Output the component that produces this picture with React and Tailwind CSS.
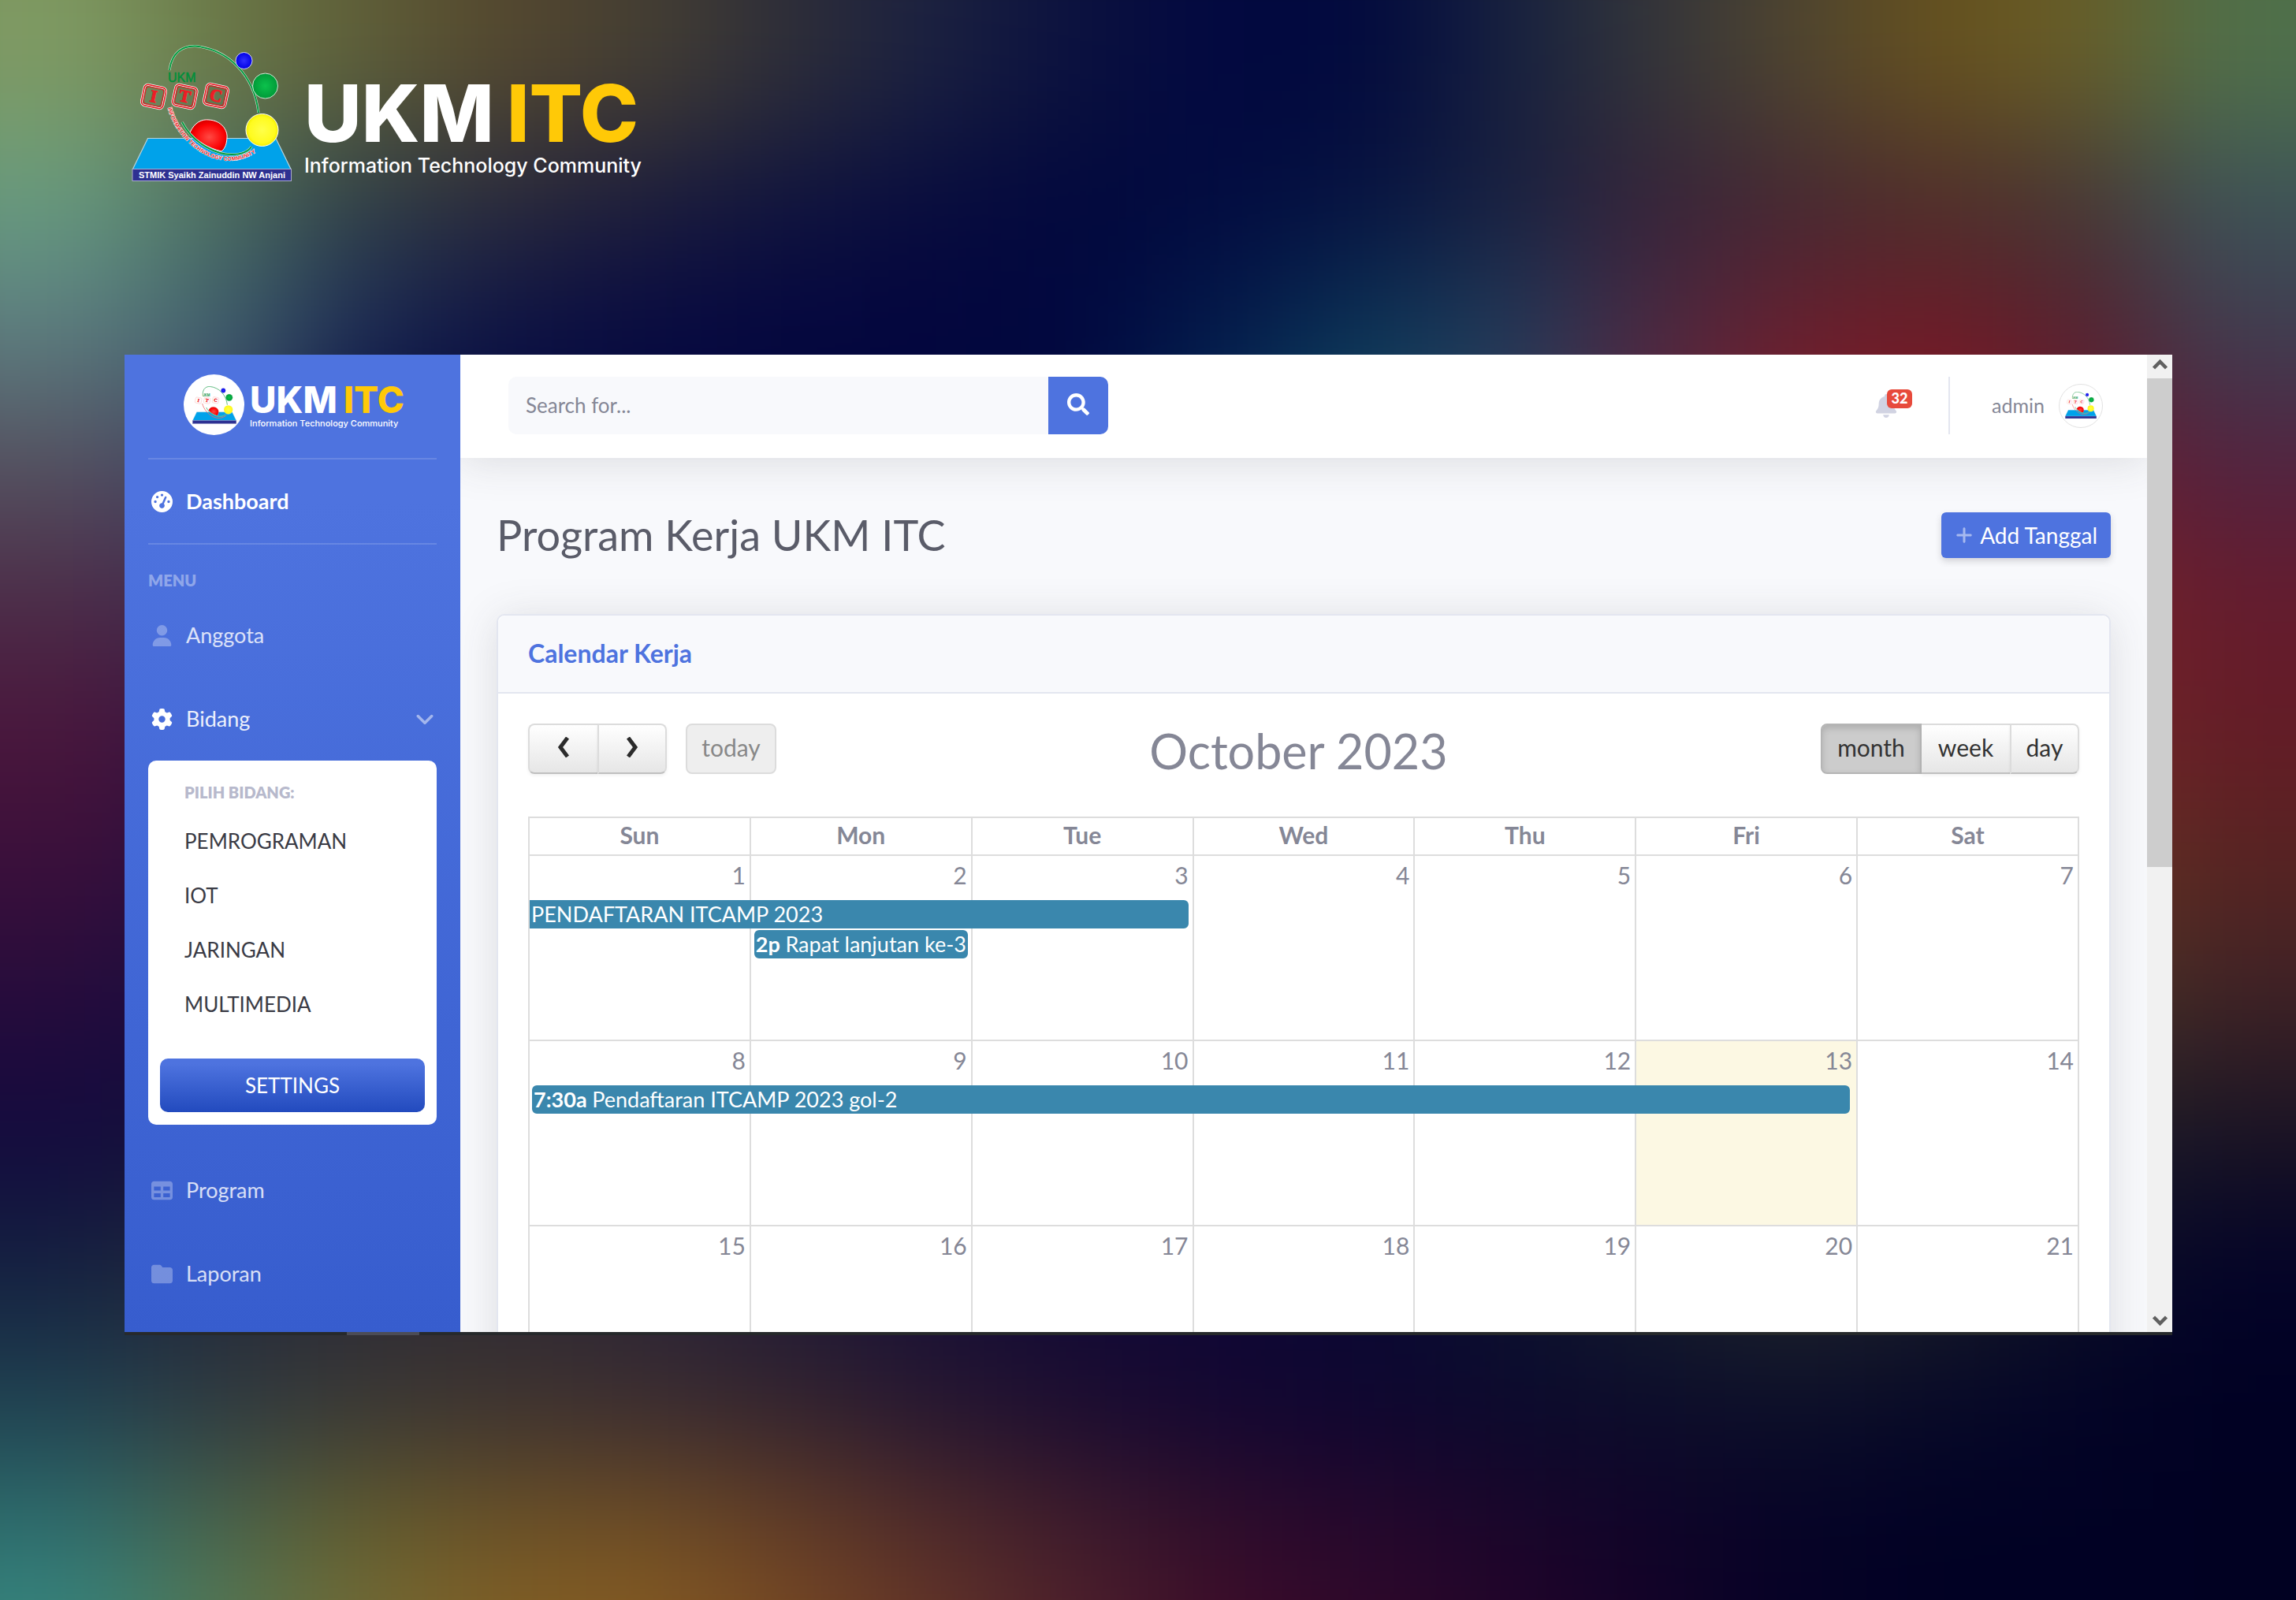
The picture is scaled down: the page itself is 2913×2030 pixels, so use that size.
import React from "react";
import { FaSearch } from "react-icons/fa";
import {
  FaAngleDown,
  FaBell,
  FaFolder,
  FaGaugeHigh,
  FaGear,
  FaPlus,
  FaTable,
  FaUser,
} from "react-icons/fa6";

const N = "#02083c";
const mid = (a, b, y, z) => [a, b, N, N, N, N, N, N, N, N, N, N, N, N, y, z];

/* Colour samples of the blurred backdrop, 16 columns by 13 rows. */
const MESH = [
  ["#7f9a62", "#6b7a48", "#5f5f38", "#55482e", "#453f33", "#2e2e38", "#1b2140", "#0b113f", "#020840", "#020a3e", "#16203f", "#33353a", "#4f4530", "#66511e", "#685e28", "#50704a"],
  ["#669c80", "#4c7062", "#2f4048", "#2a2a3c", "#1c1d3c", "#10143e", "#080c3e", "#02083c", "#020b40", "#071340", "#18203f", "#35233a", "#442833", "#4d2f2c", "#443836", "#3d5358"],
  ["#5c7c80", "#40606e", "#1c2a55", "#0d1244", "#080a42", "#04063f", "#03053e", "#010840", "#041a4a", "#0b3456", "#223a5a", "#4a2a42", "#68202f", "#6e1a27", "#57202f", "#403c50"],
  ["#54505f", "#3f4466", N, N, N, N, N, N, "#06305a", "#155066", "#30405c", "#642440", "#841a28", "#8c1a22", "#6a1c30", "#532340"],
  mid("#4c2c48", "#40284c", "#7a2226", "#651c2e"),
  mid("#4a163c", "#36113e", "#75292a", "#641c26"),
  mid("#3a0f3a", "#280e3e", "#683822", "#572422"),
  mid("#260c3c", "#170b3f", "#4a3826", "#3d2226"),
  ["#130a3e", "#14103c", "#1e1c38", "#221e38", "#1e1a3a", "#18143a", "#100c3a", "#0c083a", "#0a0638", "#0a0a36", "#101c34", "#1e2a32", "#2c3030", "#282a2c", "#1c1e28", "#1a1424"],
  ["#142040", "#22293a", "#2c2a35", "#2e2a34", "#2a2538", "#1f1b38", "#160f38", "#110a38", "#0f0736", "#0a0834", "#0d1230", "#171e2e", "#22272c", "#1b1e29", "#0c0f27", "#030328"],
  ["#20404f", "#2e3840", "#383635", "#3c3230", "#392b30", "#31222f", "#241630", "#1a0c30", "#120732", "#0d0630", "#0a0a2d", "#0b0d2b", "#0d1029", "#080a28", "#030426", "#010123"],
  ["#2f706f", "#4a684d", "#65602e", "#6f5426", "#725024", "#663f26", "#532c29", "#411d2b", "#320e2a", "#28082c", "#1c052a", "#100328", "#050226", "#010124", "#010124", "#010122"],
  ["#3a8f86", "#57805a", "#78703a", "#8a6424", "#8e6022", "#7e4c22", "#6a3828", "#54202c", "#420c2a", "#33082a", "#25052a", "#150328", "#060226", "#010124", "#010124", "#010122"],
];

function Backdrop() {
  const rows = [MESH[0], ...MESH];
  return (
    <div
      aria-hidden="true"
      className="absolute -inset-x-[6.25%] top-[-8.33%] bottom-[-8.33%] -z-10 grid grid-cols-18 grid-rows-14 blur-[80px]"
    >
      {rows.flatMap((row, r) =>
        [row[0], ...row, row[15]].map((color, c) => (
          <div key={r + "-" + c} style={{ backgroundColor: color }} />
        ))
      )}
    </div>
  );
}

function Tile({ x, y, letter, detailed }) {
  return (
    <g transform={`translate(${x} ${y}) rotate(12)`}>
      {detailed && (
        <>
          <rect x="-14" y="-13.500" width="28" height="27" rx="5" fill="none" stroke="#fff" strokeWidth="3" />
          <rect x="-11.500" y="-11" width="23" height="22" rx="3.500" fill="none" stroke="#e8121c" strokeWidth="1" />
        </>
      )}
      <rect
        x="-14"
        y="-13.500"
        width="28"
        height="27"
        rx="5"
        fill="none"
        stroke={detailed ? "#e8121c" : "#f7b0b0"}
        strokeWidth="1.500"
      />
      <text
        y="7"
        textAnchor="middle"
        className="font-['Liberation_Serif',serif] text-[22px] font-bold"
        fill="#ee1c25"
        stroke="#ee1c25"
        strokeWidth="1"
      >
        {letter}
      </text>
    </g>
  );
}

function Emblem({ id, detailed = false, className }) {
  return (
    <svg viewBox="167 57 203 174" className={className} role="img" aria-label="UKM ITC logo">
      <defs>
        <radialGradient id={id + "-r"} cx="52%" cy="55%">
          <stop offset="0" stopColor="#ff4a44" />
          <stop offset=".8" stopColor="#fb0204" />
          <stop offset="1" stopColor="#e00000" />
        </radialGradient>
        <radialGradient id={id + "-y"}>
          <stop offset="0" stopColor="#ffff4a" />
          <stop offset=".8" stopColor="#fffb1e" />
          <stop offset="1" stopColor="#f2ee00" />
        </radialGradient>
        <radialGradient id={id + "-g"}>
          <stop offset="0" stopColor="#0cc24c" />
          <stop offset="1" stopColor="#009a38" />
        </radialGradient>
        <radialGradient id={id + "-b"}>
          <stop offset="0" stopColor="#3030ff" />
          <stop offset="1" stopColor="#0000e4" />
        </radialGradient>
      </defs>
      <path d="M187.500 175.500H350L369 214.500H168.500Z" fill="#00a2ea" stroke="#b9d3da" strokeWidth="1.200" />
      <rect x="168" y="214.500" width="201.500" height="15" fill="#2e3192" stroke="#a9a9cc" strokeWidth="1" />
      <path d="M241 168C247 155 256 151 265 152C281 153 289 165 288 175C287.500 182 286 188 281 192C264 188 250 179 241 168Z" fill={`url(#${id}-r)`} stroke="#fff" strokeWidth="1" />
      <g fill="none">
        <path d="M215 89C218 66 232 58 248 58.500C290 63 322 95 328 143" stroke="#cfe3d0" strokeWidth="3" />
        <path d="M215 89C218 66 232 58 248 58.500C290 63 322 95 328 143" stroke="#009a3e" strokeWidth="1.800" />
        <path d="M231 155C246 184 276 196 294 196C306 196 315 192 319 186" stroke="#cfe3d0" strokeWidth="3" />
        <path d="M231 155C246 184 276 196 294 196C306 196 315 192 319 186" stroke="#009a3e" strokeWidth="1.800" />
      </g>
      <circle cx="309.500" cy="77" r="10.500" fill={`url(#${id}-b)`} stroke="#d5d8ee" strokeWidth="1" />
      <circle cx="336.500" cy="109" r="16" fill={`url(#${id}-g)`} stroke="#cfe8d4" strokeWidth="1" />
      <circle cx="332.500" cy="165" r="20.500" fill={`url(#${id}-y)`} stroke="#fff" strokeWidth="1" />
      <Tile x={195} y={122.5} letter="I" detailed={detailed} />
      <Tile x={234.5} y={122.5} letter="T" detailed={detailed} />
      <Tile x={274} y={121.5} letter="C" detailed={detailed} />
      <text x="213" y="104" className="font-['Liberation_Sans',sans-serif] text-[16px]" fill="#008f3a" stroke="#008f3a" strokeWidth=".5">
        UKM
      </text>
      {detailed ? (
        <>
          <path id={id + "-ring"} d="M213 137C220 164 240 186 262 197C284 208 312 206 331 188" fill="none" />
          <text
            className="font-['Liberation_Sans',sans-serif] text-[7px] font-bold"
            fill="#ee1c25"
            stroke="#fff"
            strokeWidth="1"
            paintOrder="stroke"
          >
            <textPath href={`#${id}-ring`}>INFORMATION TECHNOLOGY COMMUNITY</textPath>
          </text>
          <text
            x="269"
            y="226"
            textAnchor="middle"
            className="font-['Liberation_Sans',sans-serif] text-[11px] font-bold"
            fill="#fff"
          >
            STMIK Syaikh Zainuddin NW Anjani
          </text>
        </>
      ) : (
        <path d="M213 137C220 164 240 186 262 197C284 208 308 204 324 190" fill="none" stroke="#ef6a6a" strokeWidth="3" />
      )}
    </svg>
  );
}

function NavLink({ icon: Icon, children, strong, active, trailing }) {
  return (
    <a
      href="#"
      className={
        "flex h-[106px] items-center gap-[17px] pl-1 text-[27px] " +
        (active ? "font-bold text-white" : strong ? "text-white/90" : "text-white/80")
      }
    >
      <Icon className={"size-[27px] " + (active || strong ? "text-white" : "text-white/30")} />
      <span className="flex-1">{children}</span>
      {trailing}
    </a>
  );
}

function Sidebar() {
  return (
    <aside className="flex w-[426px] shrink-0 flex-col bg-linear-to-b from-[#4e73df] from-15% to-[#375dce] px-[30px] text-[26px]">
      <a href="#" className="flex h-[131px] items-center justify-center gap-[7px] pl-1 pb-1">
        <span className="flex size-[77px] items-center justify-center rounded-full bg-white">
          <Emblem id="brand" className="w-14" />
        </span>
        <span className="flex flex-col font-['Inter',sans-serif] text-white">
          <span className="flex gap-2 text-[46px] leading-[46px] font-extrabold">
            <span>UKM</span>
            <span className="text-[#ffc907]">ITC</span>
          </span>
          <span className="text-[11px] leading-[14px] font-medium">Information Technology Community</span>
        </span>
      </a>
      <hr className="border-t-2 border-white/15" />
      <nav className="flex flex-col">
        <NavLink icon={FaGaugeHigh} active>
          Dashboard
        </NavLink>
        <hr className="border-t-2 border-white/15" />
        <h2 className="pt-8 pb-1 text-[20px] leading-[26px] font-extrabold text-white/40">MENU</h2>
        <NavLink icon={FaUser}>Anggota</NavLink>
        <NavLink icon={FaGear} strong trailing={<FaAngleDown className="mr-px size-[28px] text-white/50" />}>
          Bidang
        </NavLink>
        <div className="mb-[30px] flex flex-col rounded-[10px] bg-white px-[15px] pt-6 pb-4 text-[#3a3b45]">
          <h3 className="pb-3 pl-[31px] text-[20px] leading-8 font-extrabold text-[#b7b9cc]">PILIH BIDANG:</h3>
          {["PEMROGRAMAN", "IOT", "JARINGAN", "MULTIMEDIA"].map((item) => (
            <a key={item} href="#" className="flex h-[69px] items-center pl-[31px]">
              {item}
            </a>
          ))}
          <button
            type="button"
            className="mt-[34px] h-[68px] rounded-[10px] bg-linear-to-b from-[#4e73df] from-10% to-[#224abe] text-white"
          >
            SETTINGS
          </button>
        </div>
        <NavLink icon={FaTable}>Program</NavLink>
        <NavLink icon={FaFolder}>Laporan</NavLink>
      </nav>
    </aside>
  );
}

function Topbar() {
  return (
    <header className="relative flex h-[131px] shrink-0 items-center bg-white pr-14 pb-0.5 pl-[61px] shadow-[0_5px_53px_rgba(58,59,69,0.15)]">
      <form className="flex h-[73px] w-[761px]" onSubmit={(e) => e.preventDefault()}>
        <input
          aria-label="Search"
          placeholder="Search for..."
          className="min-w-0 flex-1 rounded-l-[10px] bg-[#f8f9fc] px-[22px] text-[26px] text-[#6e707e] outline-none placeholder:text-[#858796]"
        />
        <button
          type="submit"
          aria-label="Search"
          className="flex w-[76px] items-center justify-center rounded-r-[10px] bg-[#4e73df] pb-1 text-white"
        >
          <FaSearch className="size-7" />
        </button>
      </form>
      <div className="ml-auto flex items-center">
        <button type="button" aria-label="Notifications" className="relative flex w-12 text-[#d1d3e2]">
          <FaBell className="size-[30px]" />
          <span className="absolute -top-1.5 right-0 flex h-6 w-8 items-center justify-center rounded-md bg-[#e74a3b] text-[18px] font-black text-white">
            32
          </span>
        </button>
        <div className="mr-[53px] ml-[46px] h-[73px] w-0.5 bg-[#e3e6f0]" />
        <a href="#" className="flex items-center gap-[18px] text-[25px] text-[#858796]">
          <span>admin</span>
          <span className="flex size-14 items-center justify-center rounded-full border border-[#e2e2e2] bg-white">
            <Emblem id="avatar" className="w-10" />
          </span>
        </a>
      </div>
    </header>
  );
}

const CONTROL =
  "flex h-16 items-center justify-center border-2 border-[#dcdcdc] border-b-[#bfbfbf] bg-linear-to-b from-white to-[#e6e6e6] pb-1 text-[30px] text-[#333] shadow-[0_2px_4px_rgba(0,0,0,0.06)]";

function Arrow({ d }) {
  return (
    <svg viewBox="0 0 20 26" className="h-[26px] w-5" fill="none" stroke="#2b2b2b" strokeWidth="5" aria-hidden="true">
      <path d={d} />
    </svg>
  );
}

function Event({ time, children, className }) {
  return (
    <a
      href="#"
      className={
        "relative z-10 block overflow-hidden border-2 border-[#3a87ad] bg-[#3a87ad] text-[27px] leading-8 whitespace-nowrap text-white " +
        className
      }
    >
      {time && <span className="font-bold">{time} </span>}
      {children}
    </a>
  );
}

const EVENTS = {
  1: <Event className="w-[calc(300%-1px)] rounded-r-md">PENDAFTARAN ITCAMP 2023</Event>,
  2: (
    <Event time="2p" className="mx-1 mt-[38px] rounded-md">
      Rapat lanjutan ke-3
    </Event>
  ),
  8: (
    <Event time="7:30a" className="ml-[3px] w-[calc(600%-1px)] rounded-md">
      Pendaftaran ITCAMP 2023 gol-2
    </Event>
  ),
};

function Calendar() {
  return (
    <table className="w-full table-fixed border-collapse text-[30px] text-[#858796]">
      <thead>
        <tr className="h-12">
          {["Sun", "Mon", "Tue", "Wed", "Thu", "Fri", "Sat"].map((day) => (
            <th key={day} className="border-2 border-[#ddd] p-0 pb-1 leading-10 font-bold">
              {day}
            </th>
          ))}
        </tr>
      </thead>
      <tbody>
        {[1, 8, 15, 22].map((start) => (
          <tr key={start} className="h-[235px]">
            {[0, 1, 2, 3, 4, 5, 6].map((i) => {
              const day = start + i;
              return (
                <td
                  key={day}
                  className={"border-2 border-[#ddd] p-0 align-top " + (day === 13 ? "bg-[#fcf8e3]" : "")}
                >
                  <div className="pt-1 pr-[5px] pb-3 text-right leading-10">{day}</div>
                  {EVENTS[day]}
                </td>
              );
            })}
          </tr>
        ))}
      </tbody>
    </table>
  );
}

function Main() {
  return (
    <div className="flex min-w-0 flex-1 flex-col overflow-hidden bg-[#f8f9fc]">
      <Topbar />
      <main className="px-[46px]">
        <div className="flex items-center justify-between pt-[69px] pb-[71px]">
          <h1 className="text-[54px] leading-[58px] text-[#5a5c69]">Program Kerja UKM ITC</h1>
          <button
            type="button"
            className="flex h-[58px] items-center gap-2 rounded-md bg-[#4e73df] px-[17px] text-[28px] text-white shadow-[0_4px_8px_rgba(58,59,69,0.2)]"
          >
            <FaPlus className="size-6 text-white/50" />
            Add Tanggal
          </button>
        </div>
        <section className="rounded-[10px] border-2 border-[#e3e6f0] bg-white shadow-[0_5px_53px_rgba(58,59,69,0.15)]">
          <h2 className="rounded-t-[10px] border-b-2 border-[#e3e6f0] bg-[#f8f9fc] px-[38px] pt-[30px] pb-[31px] text-[32px] leading-9 font-bold text-[#4e73df]">
            Calendar Kerja
          </h2>
          <div className="px-[38px] pt-[38px]">
            <div className="mb-[54px] flex h-16 items-center justify-between">
              <div className="flex">
                <button type="button" aria-label="Previous month" className={CONTROL + " w-[88px] rounded-l-lg border-r-0"}>
                  <Arrow d="M15 1L6 13L15 25" />
                </button>
                <button type="button" aria-label="Next month" className={CONTROL + " w-[88px] rounded-r-lg"}>
                  <Arrow d="M5 1L14 13L5 25" />
                </button>
                <button
                  type="button"
                  className="ml-6 flex h-16 w-[115px] items-center justify-center rounded-lg border-2 border-[#dcdcdc] bg-[#eee] pb-1 text-[30px] text-[#888]"
                >
                  today
                </button>
              </div>
              <h3 className="pt-1.5 text-[61px] leading-[60px] text-[#858796]">October 2023</h3>
              <div className="flex">
                <button
                  type="button"
                  aria-pressed="true"
                  className="flex h-16 w-[128px] items-center justify-center rounded-l-lg border-2 border-[#b5b5b5] bg-[#ccc] pb-1 text-[30px] text-[#333] shadow-[inset_0_4px_8px_rgba(0,0,0,0.15)]"
                >
                  month
                </button>
                <button type="button" className={CONTROL + " w-28 border-x-0"}>
                  week
                </button>
                <button type="button" className={CONTROL + " w-[88px] rounded-r-lg"}>
                  day
                </button>
              </div>
            </div>
            <Calendar />
          </div>
        </section>
      </main>
    </div>
  );
}

function ScrollBar() {
  return (
    <div aria-hidden="true" className="flex w-8 shrink-0 flex-col bg-[#f1f1f1]">
      <svg viewBox="0 0 32 30" className="h-[30px] w-8" fill="none" stroke="#606060" strokeWidth="4.500">
        <path d="M8.500 17L16.500 9L24.500 17" />
      </svg>
      <div className="h-1/2 bg-[#cdcdcd]" />
      <svg viewBox="0 0 32 30" className="mt-auto h-[30px] w-8" fill="none" stroke="#606060" strokeWidth="4.500">
        <path d="M8.500 11L16.500 19L24.500 11" />
      </svg>
    </div>
  );
}

export default function App() {
  return (
    <div className="relative isolate min-h-screen overflow-hidden bg-[#02083c] font-['Lato',sans-serif]">
      <Backdrop />
      <header className="flex gap-4 pt-[57px] pb-[219px] pl-[167px]">
        <Emblem id="hero" detailed className="w-[203px] shrink-0" />
        <div className="pt-[37px] font-['Inter',sans-serif] text-white">
          <h1 className="flex gap-4 text-[100px] leading-[100px] font-extrabold">
            <span>UKM</span>
            <span className="text-[#ffc907]">ITC</span>
          </h1>
          <p className="text-[25px] leading-8 font-medium">Information Technology Community</p>
        </div>
      </header>
      <div className="mr-[157px] ml-[158px]">
        <div className="flex h-[1240px] overflow-hidden">
          <Sidebar />
          <Main />
          <ScrollBar />
        </div>
        <div className="h-1 bg-[#26292b] pl-[282px]">
          <div className="h-full w-[92px] bg-[#4c4c55]" />
        </div>
      </div>
    </div>
  );
}
